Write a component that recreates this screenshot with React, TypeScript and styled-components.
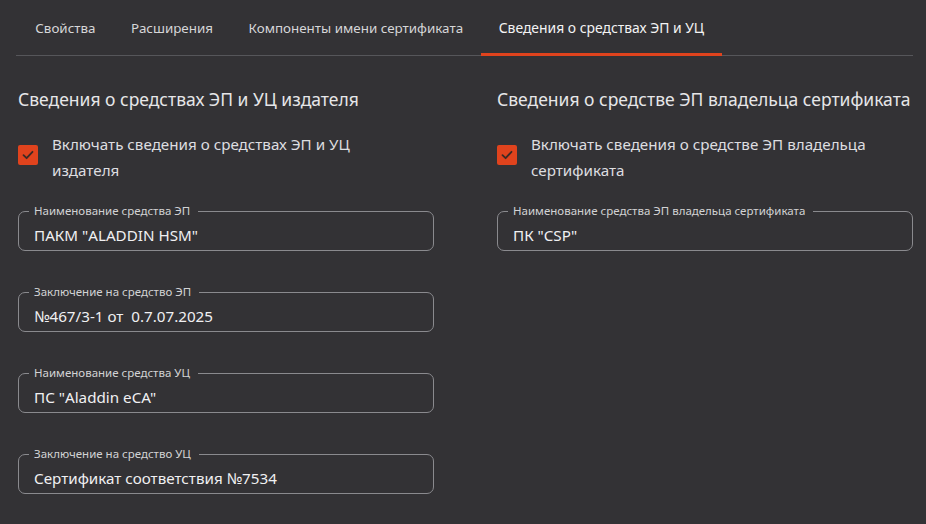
import React from 'react';
import styled, { createGlobalStyle } from 'styled-components';

const GlobalStyle = createGlobalStyle`
  html, body {
    margin: 0;
    padding: 0;
    background: #333235;
  }
  body {
    font-family: 'Noto Sans', 'Open Sans', sans-serif;
    color: #e4e4e6;
  }
`;

interface IField {
  label: string;
  value: string;
}

const TABS = ['Свойства', 'Расширения', 'Компоненты имени сертификата', 'Сведения о средствах ЭП и УЦ'];

const ISSUER_FIELDS: IField[] = [
  { label: 'Наименование средства ЭП', value: 'ПАКМ "ALADDIN HSM"' },
  { label: 'Заключение на средство ЭП', value: '№467/3-1 от  0.7.07.2025' },
  { label: 'Наименование средства УЦ', value: 'ПС "Aladdin eCA"' },
  { label: 'Заключение на средство УЦ', value: 'Сертификат соответствия №7534' },
];

const OWNER_FIELDS: IField[] = [
  { label: 'Наименование средства ЭП владельца сертификата', value: 'ПК "CSP"' },
];

const Page = styled.div`
  width: 926px;
  height: 524px;
  box-sizing: border-box;
  padding: 0 13px 0 16px;
  overflow: hidden;
`;

const TabBar = styled.nav`
  display: flex;
  height: 56px;
  padding-left: 1.5px;
  border-bottom: 1px solid #56565a;
  box-sizing: border-box;
`;

const Tab = styled.div<{ $active?: boolean }>`
  display: flex;
  align-items: center;
  padding: 2px 17.8px 0;
  font-size: ${(p) => (p.$active ? '13.9px' : '13.4px')};
  color: ${(p) => (p.$active ? '#f4f4f4' : '#d6d6d8')};
  border-bottom: 3px solid ${(p) => (p.$active ? '#e0431d' : 'transparent')};
  margin-bottom: -1px;
  white-space: nowrap;
  cursor: pointer;
`;

const Columns = styled.div`
  display: grid;
  grid-template-columns: 416px 416px;
  column-gap: 63px;
  padding-left: 2px;
`;

const Column = styled.section`
  display: flex;
  flex-direction: column;
`;

const SectionTitle = styled.h2`
  margin: 31px 0 0;
  font-size: 17.5px;
  font-weight: 400;
  line-height: 24px;
  color: #e6e6e8;
  white-space: nowrap;
`;

const CheckRow = styled.label`
  display: flex;
  align-items: flex-start;
  gap: 14px;
  margin-top: 20px;
  margin-bottom: 21px;
`;

const CheckBox = styled.span`
  flex: none;
  width: 20px;
  height: 20px;
  margin-top: 14px;
  border-radius: 2px;
  background: #e0431d;
  display: flex;
  align-items: center;
  justify-content: center;
`;

const CheckText = styled.span`
  font-size: 15.2px;
  line-height: 26px;
  color: #dedee0;
  max-width: 345px;
`;

const FieldSet = styled.fieldset`
  margin: 0 0 34px;
  padding: 0 15px;
  height: 47px;
  box-sizing: border-box;
  border: 1px solid #8a8a8e;
  border-radius: 7px;
  min-width: 0;
`;

const Legend = styled.legend`
  padding: 0 8px 0 5px;
  margin-left: -5px;
  font-size: 11.5px;
  line-height: 14px;
  color: #d2d2d4;
`;

const Value = styled.div`
  font-size: 15.2px;
  line-height: 20px;
  margin-top: 7px;
  color: #f0f0f2;
  white-space: pre;
`;

const Check = () => (
  <svg width="14" height="14" viewBox="0 0 14 14" fill="none">
    <path d="M2.5 7.2 L5.6 10.2 L11.5 3.8" stroke="#3b2a25" strokeWidth="1.8" strokeLinecap="round" strokeLinejoin="round" />
  </svg>
);

const Field = ({ label, value }: IField) => (
  <FieldSet>
    <Legend>{label}</Legend>
    <Value>{value}</Value>
  </FieldSet>
);

const App = () => {
  return (
    <Page>
      <GlobalStyle />
      <TabBar>
        {TABS.map((t, i) => (
          <Tab key={t} $active={i === TABS.length - 1}>
            {t}
          </Tab>
        ))}
      </TabBar>
      <Columns>
        <Column>
          <SectionTitle>Сведения о средствах ЭП и УЦ издателя</SectionTitle>
          <CheckRow>
            <CheckBox>
              <Check />
            </CheckBox>
            <CheckText>Включать сведения о средствах ЭП и УЦ издателя</CheckText>
          </CheckRow>
          {ISSUER_FIELDS.map((f) => (
            <Field key={f.label} {...f} />
          ))}
        </Column>
        <Column>
          <SectionTitle>Сведения о средстве ЭП владельца сертификата</SectionTitle>
          <CheckRow>
            <CheckBox>
              <Check />
            </CheckBox>
            <CheckText>Включать сведения о средстве ЭП владельца сертификата</CheckText>
          </CheckRow>
          {OWNER_FIELDS.map((f) => (
            <Field key={f.label} {...f} />
          ))}
        </Column>
      </Columns>
    </Page>
  );
};

export default App;
